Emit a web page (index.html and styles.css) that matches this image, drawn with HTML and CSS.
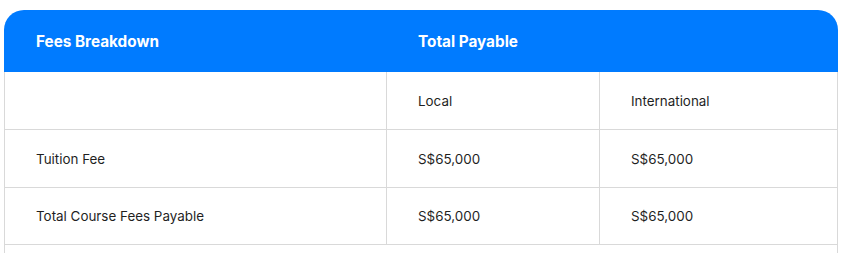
FILE: index.html
```html
<!DOCTYPE html>
<html lang="en">
<head>
<meta charset="utf-8">
<title>Fees</title>
<link rel="stylesheet" href="styles.css">
</head>
<body>
<div class="fees">
  <table class="fees-table">
    <colgroup>
      <col class="c1"><col class="c2"><col class="c3">
    </colgroup>
    <thead>
      <tr class="head-row">
        <th class="first">Fees Breakdown</th>
        <th colspan="2">Total Payable</th>
      </tr>
    </thead>
    <tbody>
      <tr>
        <td></td>
        <td>Local</td>
        <td>International</td>
      </tr>
      <tr>
        <td>Tuition Fee</td>
        <td>S$65,000</td>
        <td>S$65,000</td>
      </tr>
      <tr class="short">
        <td>Total Course Fees Payable</td>
        <td>S$65,000</td>
        <td>S$65,000</td>
      </tr>
      <tr class="extra">
        <td colspan="3"></td>
      </tr>
    </tbody>
  </table>
</div>
</body>
</html>
```
FILE: styles.css
```css
html, body {
  margin: 0;
  padding: 0;
  background: #ffffff;
}
body {
  padding: 10px 0 0 4px;
  font-family: Inter, "Liberation Sans", sans-serif;
}
.fees {
  width: 834px;
  border-radius: 20px 20px 0 0;
  overflow: hidden;
}
.fees-table {
  width: 834px;
  border-collapse: separate;
  border-spacing: 0;
  table-layout: fixed;
}
.c1 { width: 383px; }
.c2 { width: 213px; }
.c3 { width: 238px; }
.head-row th {
  background: #007bff;
  color: #ffffff;
  font-size: 15.3px;
  font-weight: 700;
  text-align: left;
  height: 62px;
  padding: 0 0 0 31px;
  border: none;
  box-sizing: border-box;
}
.head-row th.first {
  padding-left: 32px;
}
.fees-table td {
  border-right: 1px solid #d9d9d9;
  border-bottom: 1px solid #d9d9d9;
  font-size: 13.4px;
  color: #1f1f1f;
  height: 58px;
  padding: 0 0 0 31px;
  box-sizing: border-box;
  vertical-align: middle;
}
.fees-table td:first-child {
  border-left: 1px solid #d9d9d9;
}
.fees-table tr.short td {
  height: 57px;
}
```
